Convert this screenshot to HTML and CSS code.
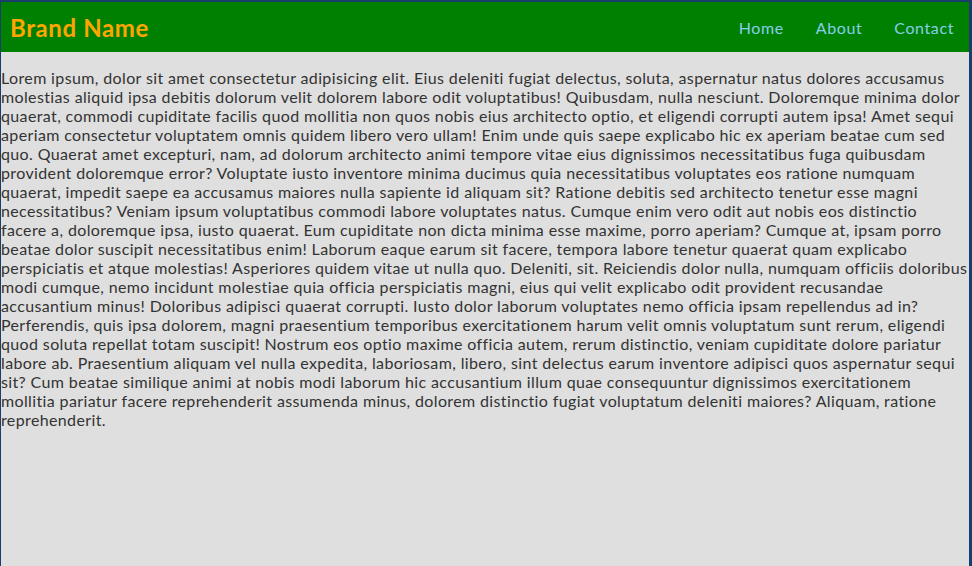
FILE: index.html
```html
<!DOCTYPE html>
<html lang="en">
<head>
<meta charset="utf-8">
<title>Brand Name</title>
<link rel="stylesheet" href="styles.css">
</head>
<body>
<div class="frame">
  <header class="topbar">
    <div class="brand">Brand Name</div>
    <nav class="nav">
      <a class="nav-link" href="#">Home</a>
      <a class="nav-link" href="#">About</a>
      <a class="nav-link" href="#">Contact</a>
    </nav>
  </header>
  <main class="content">
    <p class="text">Lorem ipsum, dolor sit amet consectetur adipisicing elit. Eius deleniti fugiat delectus, soluta, aspernatur natus dolores accusamus<br>
molestias aliquid ipsa debitis dolorum velit dolorem labore odit voluptatibus! Quibusdam, nulla nesciunt. Doloremque minima dolor<br>
quaerat, commodi cupiditate facilis quod mollitia non quos nobis eius architecto optio, et eligendi corrupti autem ipsa! Amet sequi<br>
aperiam consectetur voluptatem omnis quidem libero vero ullam! Enim unde quis saepe explicabo hic ex aperiam beatae cum sed<br>
quo. Quaerat amet excepturi, nam, ad dolorum architecto animi tempore vitae eius dignissimos necessitatibus fuga quibusdam<br>
provident doloremque error? Voluptate iusto inventore minima ducimus quia necessitatibus voluptates eos ratione numquam<br>
quaerat, impedit saepe ea accusamus maiores nulla sapiente id aliquam sit? Ratione debitis sed architecto tenetur esse magni<br>
necessitatibus? Veniam ipsum voluptatibus commodi labore voluptates natus. Cumque enim vero odit aut nobis eos distinctio<br>
facere a, doloremque ipsa, iusto quaerat. Eum cupiditate non dicta minima esse maxime, porro aperiam? Cumque at, ipsam porro<br>
beatae dolor suscipit necessitatibus enim! Laborum eaque earum sit facere, tempora labore tenetur quaerat quam explicabo<br>
perspiciatis et atque molestias! Asperiores quidem vitae ut nulla quo. Deleniti, sit. Reiciendis dolor nulla, numquam officiis doloribus<br>
modi cumque, nemo incidunt molestiae quia officia perspiciatis magni, eius qui velit explicabo odit provident recusandae<br>
accusantium minus! Doloribus adipisci quaerat corrupti. Iusto dolor laborum voluptates nemo officia ipsam repellendus ad in?<br>
Perferendis, quis ipsa dolorem, magni praesentium temporibus exercitationem harum velit omnis voluptatum sunt rerum, eligendi<br>
quod soluta repellat totam suscipit! Nostrum eos optio maxime officia autem, rerum distinctio, veniam cupiditate dolore pariatur<br>
labore ab. Praesentium aliquam vel nulla expedita, laboriosam, libero, sint delectus earum inventore adipisci quos aspernatur sequi<br>
sit? Cum beatae similique animi at nobis modi laborum hic accusantium illum quae consequuntur dignissimos exercitationem<br>
mollitia pariatur facere reprehenderit assumenda minus, dolorem distinctio fugiat voluptatum deleniti maiores? Aliquam, ratione<br>
reprehenderit.</p>
  </main>
</div>
</body>
</html>
```

FILE: styles.css
```css
html, body {
  margin: 0;
  padding: 0;
  height: 100%;
  overflow: hidden;
}

body {
  background: #1b3d6b;
  font-family: Lato, "Open Sans", sans-serif;
}

.frame {
  box-sizing: border-box;
  height: 100%;
  border-top: 2px solid #1b3d6b;
  border-left: 1px solid #1b3d6b;
  border-right: 3px solid #1b3d6b;
  background: #dfdfdf;
  display: flex;
  flex-direction: column;
}

.topbar {
  display: flex;
  align-items: center;
  justify-content: space-between;
  height: 50px;
  background: #008000;
  padding-left: 9px;
}

.brand {
  color: #ffa500;
  font-size: 24px;
  font-weight: 700;
  letter-spacing: 0.6px;
}

.nav {
  display: flex;
  align-items: center;
  margin-right: -1px;
}

.nav-link {
  color: #87ceeb;
  text-decoration: none;
  font-size: 16px;
  letter-spacing: 0.6px;
  padding: 0 16px;
}

.content {
  flex: 1;
}

.text {
  margin: 16px 0 0 0;
  color: #333;
  font-size: 16px;
  line-height: 19px;
  white-space: nowrap;
  letter-spacing: 0.37px;
}
```
